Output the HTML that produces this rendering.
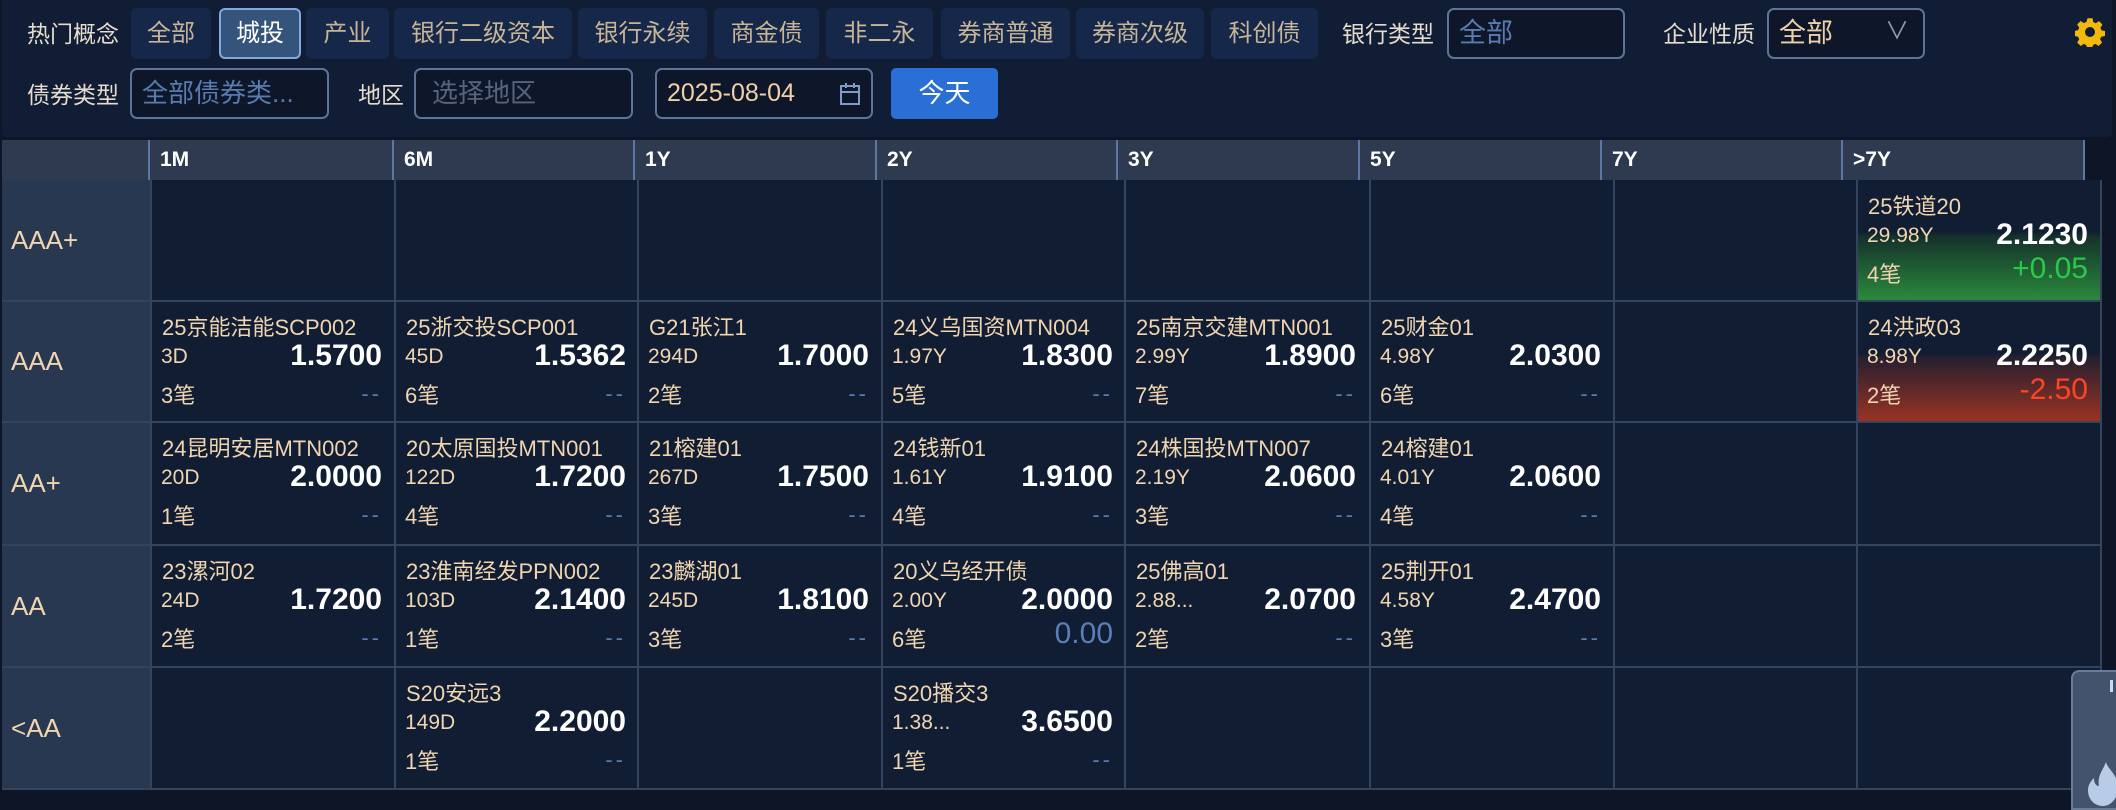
<!DOCTYPE html>
<html><head><meta charset="utf-8"><style>
*{margin:0;padding:0;box-sizing:border-box}
body{width:2116px;height:804px;background:#0d1526;position:relative;overflow:hidden;font-family:"Liberation Sans","Noto Sans CJK SC",sans-serif;color:#f0d5b0}
.a{position:absolute}
.top{left:2px;top:0;width:2110px;height:137px;background:#101d35;border-radius:0 0 4px 4px}
.lbl{position:absolute;font-size:23px;color:#e6dccd;line-height:26px}
.tag{position:absolute;top:8px;height:51px;background:#15284a;border-radius:6px;color:#c8b597;font-size:24px;text-align:center;line-height:51px}
.tag.on{background:#35547c;border:2px solid #7fa9e0;color:#fff;line-height:47px}
.inp{position:absolute;border:2px solid #5d7397;border-radius:7px;background:#0e1729;font-size:27px;line-height:47px;padding-left:10px}
.hdr{left:2px;top:140px;width:2081px;height:40px;background:#2d3a4f}
.hc{position:absolute;top:140px;height:40px;border-left:2px solid #5b77a6;color:#fff;font-weight:bold;font-size:21px;line-height:40px;padding-left:10px}
.body{left:2px;top:180px;width:2098px;height:610px;background:#101d33}
.lc{position:absolute;left:2px;width:148px;background:#283850;font-size:26px;padding-left:9px;color:#f0d5b0}
.vl{position:absolute;top:180px;width:2px;height:610px;background:#34445c}
.hl{position:absolute;left:2px;width:2098px;height:2px;background:#34445c}
.c{position:absolute;width:242px;height:121px}
.c .n{position:absolute;left:10px;top:9px;font-size:22px;white-space:nowrap}
.c .d{position:absolute;left:9px;top:44px;font-size:21px}
.c .p{position:absolute;right:12px;top:38px;font-size:30px;color:#fff;font-weight:bold}
.c .k{position:absolute;left:9px;top:77px;font-size:22px}
.c .x{position:absolute;right:12px;top:80px;font-size:22px;color:#5a7bb0;letter-spacing:3px}
.g{background:linear-gradient(#101d33 0,#101d33 52px,#15302c 56px,#2a8a3c 120px)}
.r{background:linear-gradient(#101d33 0,#101d33 52px,#251f2f 56px,#993324 120px)}
</style></head><body>
<div class="a top"></div>
<div class="lbl" style="left:27px;top:21px">热门概念</div>
<div class="tag" style="left:131px;width:80px">全部</div>
<div class="tag on" style="left:219px;width:82px">城投</div>
<div class="tag" style="left:306px;width:83px">产业</div>
<div class="tag" style="left:394px;width:178px">银行二级资本</div>
<div class="tag" style="left:578px;width:129px">银行永续</div>
<div class="tag" style="left:714px;width:105px">商金债</div>
<div class="tag" style="left:826px;width:107px">非二永</div>
<div class="tag" style="left:941px;width:129px">券商普通</div>
<div class="tag" style="left:1076px;width:128px">券商次级</div>
<div class="tag" style="left:1211px;width:107px">科创债</div>
<div class="lbl" style="left:1342px;top:21px">银行类型</div>
<div class="inp" style="left:1447px;top:8px;width:178px;height:51px;color:#5a7bb0">全部</div>
<div class="lbl" style="left:1663px;top:21px">企业性质</div>
<div class="inp" style="left:1767px;top:8px;width:158px;height:51px;color:#f0d0a8">全部<span style="position:absolute;right:14px;top:-2px;color:#8a9ab0;font-size:24px">∨</span></div>
<svg class="a" style="left:2075px;top:17px" width="30" height="30" viewBox="0 0 24 24"><path fill="#f2b80c" d="M10 1h4l.6 3 2 1 2.6-1.7 2.8 2.8L20.3 8.7l1 2 2.7.5v4l-3 .6-1 2 1.7 2.6-2.8 2.8-2.6-1.7-2 1-.6 3h-4l-.6-3-2-1-2.6 1.7-2.8-2.8 1.7-2.6-1-2-3-.6v-4l3-.6 1-2-1.7-2.6 2.8-2.8 2.6 1.7 2-1zM12 8a4 4 0 100 8 4 4 0 000-8z"/></svg>
<div class="lbl" style="left:27px;top:82px">债券类型</div>
<div class="inp" style="left:130px;top:68px;width:199px;height:51px;color:#5a7bb0;font-size:26px">全部债券类...</div>
<div class="lbl" style="left:358px;top:82px">地区</div>
<div class="inp" style="left:414px;top:68px;width:219px;height:51px;color:#56657d;font-size:26px;padding-left:16px">选择地区</div>
<div class="inp" style="left:655px;top:68px;width:218px;height:51px;color:#f0d0a8;font-size:25px">2025-08-04<svg style="position:absolute;right:10px;top:12px" width="22" height="24" viewBox="0 0 22 24"><rect x="2" y="4" width="18" height="18" fill="none" stroke="#7f9cc8" stroke-width="2"/><line x1="2" y1="10" x2="20" y2="10" stroke="#7f9cc8" stroke-width="2"/><line x1="7" y1="1" x2="7" y2="6" stroke="#7f9cc8" stroke-width="2"/><line x1="15" y1="1" x2="15" y2="6" stroke="#7f9cc8" stroke-width="2"/></svg></div>
<div class="a" style="left:891px;top:68px;width:107px;height:51px;background:#2a6fd6;border-radius:5px;color:#fff;font-size:26px;text-align:center;line-height:51px">今天</div>

<div class="a hdr"></div>
<div class="hc" style="left:148px;width:244px">1M</div>
<div class="hc" style="left:392px;width:241px">6M</div>
<div class="hc" style="left:633px;width:242px">1Y</div>
<div class="hc" style="left:875px;width:241px">2Y</div>
<div class="hc" style="left:1116px;width:242px">3Y</div>
<div class="hc" style="left:1358px;width:242px">5Y</div>
<div class="hc" style="left:1600px;width:241px">7Y</div>
<div class="hc" style="left:1841px;width:242px">&gt;7Y</div>
<div class="hc" style="left:2083px;width:2px;padding:0"></div>

<div class="a body"></div>
<div class="lc" style="top:180px;height:121px;line-height:121px">AAA+</div>
<div class="lc" style="top:301px;height:121px;line-height:121px">AAA</div>
<div class="lc" style="top:422px;height:123px;line-height:123px">AA+</div>
<div class="lc" style="top:545px;height:122px;line-height:122px">AA</div>
<div class="lc" style="top:667px;height:123px;line-height:123px">&lt;AA</div>

<div class="c g" style="left:1858px;top:180px"><div class="n">25铁道20</div><div class="d">29.98Y</div><div class="p">2.1230</div><div class="k">4笔</div><div class="x" style="color:#2cc84a;font-size:30px;top:72px;letter-spacing:0">+0.05</div></div>
<div class="c r" style="left:1858px;top:301px"><div class="n">24洪政03</div><div class="d">8.98Y</div><div class="p">2.2250</div><div class="k">2笔</div><div class="x" style="color:#ff4422;font-size:30px;top:72px;letter-spacing:0">-2.50</div></div>

<div class="c" style="left:152px;top:301px"><div class="n">25京能洁能SCP002</div><div class="d">3D</div><div class="p">1.5700</div><div class="k">3笔</div><div class="x">--</div></div>
<div class="c" style="left:396px;top:301px"><div class="n">25浙交投SCP001</div><div class="d">45D</div><div class="p">1.5362</div><div class="k">6笔</div><div class="x">--</div></div>
<div class="c" style="left:639px;top:301px"><div class="n">G21张江1</div><div class="d">294D</div><div class="p">1.7000</div><div class="k">2笔</div><div class="x">--</div></div>
<div class="c" style="left:883px;top:301px"><div class="n">24义乌国资MTN004</div><div class="d">1.97Y</div><div class="p">1.8300</div><div class="k">5笔</div><div class="x">--</div></div>
<div class="c" style="left:1126px;top:301px"><div class="n">25南京交建MTN001</div><div class="d">2.99Y</div><div class="p">1.8900</div><div class="k">7笔</div><div class="x">--</div></div>
<div class="c" style="left:1371px;top:301px"><div class="n">25财金01</div><div class="d">4.98Y</div><div class="p">2.0300</div><div class="k">6笔</div><div class="x">--</div></div>

<div class="c" style="left:152px;top:422px"><div class="n">24昆明安居MTN002</div><div class="d">20D</div><div class="p">2.0000</div><div class="k">1笔</div><div class="x">--</div></div>
<div class="c" style="left:396px;top:422px"><div class="n">20太原国投MTN001</div><div class="d">122D</div><div class="p">1.7200</div><div class="k">4笔</div><div class="x">--</div></div>
<div class="c" style="left:639px;top:422px"><div class="n">21榕建01</div><div class="d">267D</div><div class="p">1.7500</div><div class="k">3笔</div><div class="x">--</div></div>
<div class="c" style="left:883px;top:422px"><div class="n">24钱新01</div><div class="d">1.61Y</div><div class="p">1.9100</div><div class="k">4笔</div><div class="x">--</div></div>
<div class="c" style="left:1126px;top:422px"><div class="n">24株国投MTN007</div><div class="d">2.19Y</div><div class="p">2.0600</div><div class="k">3笔</div><div class="x">--</div></div>
<div class="c" style="left:1371px;top:422px"><div class="n">24榕建01</div><div class="d">4.01Y</div><div class="p">2.0600</div><div class="k">4笔</div><div class="x">--</div></div>

<div class="c" style="left:152px;top:545px"><div class="n">23漯河02</div><div class="d">24D</div><div class="p">1.7200</div><div class="k">2笔</div><div class="x">--</div></div>
<div class="c" style="left:396px;top:545px"><div class="n">23淮南经发PPN002</div><div class="d">103D</div><div class="p">2.1400</div><div class="k">1笔</div><div class="x">--</div></div>
<div class="c" style="left:639px;top:545px"><div class="n">23麟湖01</div><div class="d">245D</div><div class="p">1.8100</div><div class="k">3笔</div><div class="x">--</div></div>
<div class="c" style="left:883px;top:545px"><div class="n">20义乌经开债</div><div class="d">2.00Y</div><div class="p">2.0000</div><div class="k">6笔</div><div class="x" style="font-size:30px;top:72px;letter-spacing:0;color:#5a7fb8">0.00</div></div>
<div class="c" style="left:1126px;top:545px"><div class="n">25佛高01</div><div class="d">2.88...</div><div class="p">2.0700</div><div class="k">2笔</div><div class="x">--</div></div>
<div class="c" style="left:1371px;top:545px"><div class="n">25荆开01</div><div class="d">4.58Y</div><div class="p">2.4700</div><div class="k">3笔</div><div class="x">--</div></div>

<div class="c" style="left:396px;top:667px"><div class="n">S20安远3</div><div class="d">149D</div><div class="p">2.2000</div><div class="k">1笔</div><div class="x">--</div></div>
<div class="c" style="left:883px;top:667px"><div class="n">S20播交3</div><div class="d">1.38...</div><div class="p">3.6500</div><div class="k">1笔</div><div class="x">--</div></div>

<div class="vl" style="left:150px"></div><div class="vl" style="left:394px"></div><div class="vl" style="left:637px"></div><div class="vl" style="left:881px"></div><div class="vl" style="left:1124px"></div><div class="vl" style="left:1369px"></div><div class="vl" style="left:1613px"></div><div class="vl" style="left:1856px"></div><div class="vl" style="left:2100px"></div>
<div class="hl" style="top:300px"></div><div class="hl" style="top:421px"></div><div class="hl" style="top:544px"></div><div class="hl" style="top:666px"></div><div class="hl" style="top:788px"></div>

<div class="a" style="left:2071px;top:670px;width:50px;height:140px;background:#43536e;border:2px solid #6a7c98;border-radius:8px 0 0 0"></div>
<div class="a" style="left:2110px;top:680px;width:3px;height:12px;background:#cfd8e6"></div>
<svg class="a" style="left:2088px;top:762px" width="30" height="44" viewBox="0 0 30 44"><path fill="#b8cce8" d="M18 0c2 8 12 12 12 26 0 10-7 18-15 18S0 38 0 28c0-6 4-10 6-12 0 5 2 8 5 8-2-10 4-16 7-24z"/></svg>
</body></html>
